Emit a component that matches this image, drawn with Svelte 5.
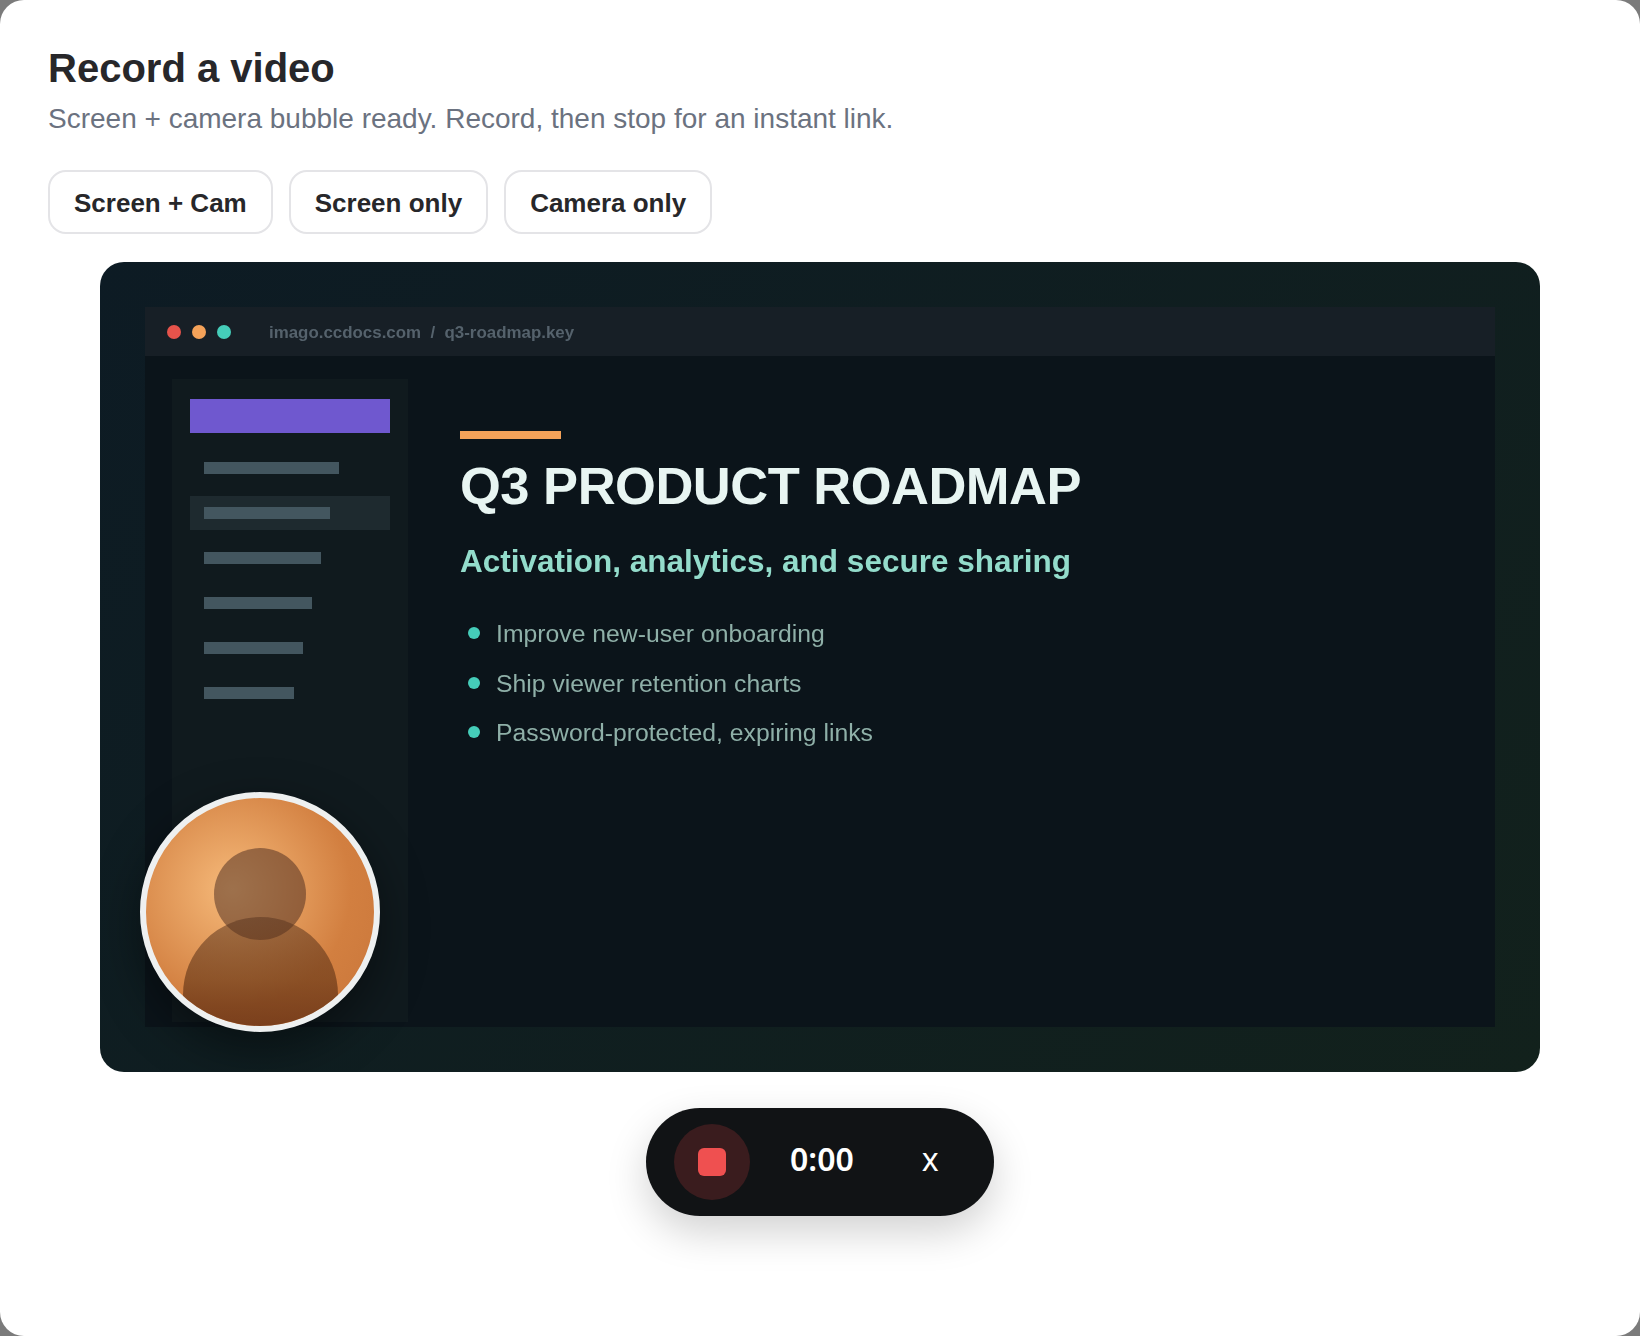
<script>
  const modes = ['Screen + Cam', 'Screen only', 'Camera only']
  const navWidths = [135, 126, 117, 108, 99, 90]
  const bullets = ['Improve new-user onboarding', 'Ship viewer retention charts', 'Password-protected, expiring links']
</script>

<div class="card">
  <h1>Record a video</h1>
  <p class="sub">Screen + camera bubble ready. Record, then stop for an instant link.</p>

  <div class="modes">
    {#each modes as mode}
      <button class="mode">{mode}</button>
    {/each}
  </div>

  <div class="stage">
    <div class="window">
      <div class="titlebar">
        <span class="dot red"></span>
        <span class="dot orange"></span>
        <span class="dot teal"></span>
        <span class="url">imago.ccdocs.com&nbsp; /&nbsp; q3-roadmap.key</span>
      </div>
      <div class="body">
        <div class="sidebar">
          <div class="brand"></div>
          {#each navWidths as w, i}
            <div class="nav" class:active={i === 1}>
              <span class="bar" style="width: {w}px"></span>
            </div>
          {/each}
        </div>
        <div class="slide">
          <div class="accent"></div>
          <h2>Q3 PRODUCT ROADMAP</h2>
          <h3>Activation, analytics, and secure sharing</h3>
          <ul>
            {#each bullets as item}
              <li><span class="bullet"></span>{item}</li>
            {/each}
          </ul>
        </div>
      </div>
    </div>

    <div class="bubble">
      <div class="head"></div>
      <div class="shoulders"></div>
    </div>
  </div>

  <div class="controls">
    <button class="stop"><span></span></button>
    <span class="time">0:00</span>
    <button class="close">x</button>
  </div>
</div>

<style>
  :global(body) {
    background: #7b7b7b;
  }

  .card {
    box-sizing: border-box;
    height: 1336px;
    padding: 48px 48px 0;
    background: #fff;
    border-radius: 24px;
    font-family: "Liberation Sans", Arial, sans-serif;
    overflow: hidden;
  }

  h1 {
    margin: 0;
    font-size: 40px;
    line-height: 40px;
    font-weight: 700;
    color: #27272a;
  }

  .sub {
    margin: 12px 0 0;
    font-size: 28px;
    line-height: 38px;
    color: #6b7280;
  }

  .modes {
    display: flex;
    gap: 16px;
    margin-top: 32px;
  }

  .mode {
    height: 64px;
    padding: 3px 24px 0;
    border: 2px solid #e4e4e7;
    border-radius: 18px;
    background: #fff;
    font-family: inherit;
    font-size: 26px;
    font-weight: 700;
    color: #27272a;
  }

  .stage {
    position: relative;
    box-sizing: border-box;
    width: 1440px;
    height: 810px;
    margin: 28px auto 0;
    padding: 45px;
    border-radius: 24px;
    background: linear-gradient(135deg, #0d1b24 0%, #12211c 100%);
    overflow: hidden;
  }

  .window {
    display: flex;
    flex-direction: column;
    height: 100%;
    background: #0b141a;
  }

  .titlebar {
    display: flex;
    align-items: center;
    flex: none;
    height: 49px;
    padding-left: 22px;
    gap: 11px;
    background: #171f26;
  }

  .dot {
    width: 14px;
    height: 14px;
    border-radius: 50%;
  }

  .red { background: #e5534b; }
  .orange { background: #f4a259; }
  .teal { background: #45cdb9; }

  .url {
    margin-left: 27px;
    padding-top: 3px;
    font-size: 16.9px;
    font-weight: 700;
    color: #55626c;
    filter: blur(0.35px);
  }

  .body {
    display: flex;
    flex: 1;
    min-height: 0;
  }

  .sidebar {
    box-sizing: border-box;
    width: 236px;
    margin: 23px 0 5px 27px;
    padding: 20px 18px;
    background: #101a1e;
  }

  .brand {
    height: 34px;
    margin-bottom: 18px;
    background: #6f58cf;
  }

  .nav {
    display: flex;
    align-items: center;
    height: 34px;
    margin-bottom: 11px;
    padding-left: 13.5px;
  }

  .nav.active {
    background: #1e2a2f;
  }

  .bar {
    height: 11.5px;
    background: #43565f;
  }

  .slide {
    padding: 75px 0 0 52px;
    color: #e8f5f2;
    filter: blur(0.35px);
  }

  .accent {
    width: 101px;
    height: 8px;
    background: #f4a259;
  }

  h2 {
    margin: 16px 0 0;
    font-size: 52.5px;
    line-height: 62px;
    letter-spacing: -0.5px;
    font-weight: 700;
    color: #e8f5f2;
  }

  h3 {
    margin: 24px 0 0;
    font-size: 31.5px;
    line-height: 40px;
    font-weight: 700;
    color: #93dccb;
  }

  ul {
    margin: 28.5px 0 0;
    padding: 0;
    list-style: none;
  }

  li {
    display: flex;
    align-items: center;
    height: 49.5px;
    padding-left: 8px;
    font-size: 24.75px;
    color: #8fb0a8;
  }

  .bullet {
    flex: none;
    width: 12px;
    height: 12px;
    margin: 0 16px 2px 0;
    border-radius: 50%;
    background: #45cdb9;
  }

  .bubble {
    position: absolute;
    left: 40px;
    bottom: 40px;
    box-sizing: border-box;
    width: 240px;
    height: 240px;
    border: 6px solid #eef0f0;
    border-radius: 50%;
    background: radial-gradient(circle at 38% 40%, #f6ba7a 0%, #d27f40 60%, #c8753a 100%);
    box-shadow: 0 16px 48px rgba(0, 0, 0, 0.45);
    overflow: hidden;
  }

  .head {
    position: absolute;
    left: 68px;
    top: 50px;
    width: 92px;
    height: 92px;
    border-radius: 50%;
    background: rgba(70, 40, 30, 0.5);
  }

  .shoulders {
    position: absolute;
    left: 37px;
    top: 119px;
    width: 155px;
    height: 155px;
    border-radius: 50%;
    background: linear-gradient(to bottom, rgba(85, 50, 30, 0.5) 0%, rgba(95, 50, 20, 0.62) 40%, rgba(90, 40, 15, 0.72) 70%);
  }

  .controls {
    display: flex;
    align-items: center;
    box-sizing: border-box;
    width: 348px;
    height: 108px;
    margin: 36px auto 0;
    padding: 0 28px;
    border-radius: 54px;
    background: #111315;
    box-shadow: 0 16px 40px rgba(0, 0, 0, 0.18);
  }

  .stop {
    display: flex;
    align-items: center;
    justify-content: center;
    flex: none;
    width: 76px;
    height: 76px;
    padding: 0;
    border: 0;
    border-radius: 50%;
    background: #3a1c1e;
  }

  .stop span {
    width: 28px;
    height: 28px;
    border-radius: 6px;
    background: #ef5050;
  }

  .time {
    margin: -8px 0 0 40px;
    font-family: "Noto Sans", sans-serif;
    font-size: 32px;
    font-weight: 600;
    color: #fff;
  }

  .close {
    margin: -8px 0 0 68px;
    padding: 0;
    border: 0;
    background: none;
    font-family: "Noto Sans", sans-serif;
    font-size: 32px;
    color: #fff;
  }
</style>
